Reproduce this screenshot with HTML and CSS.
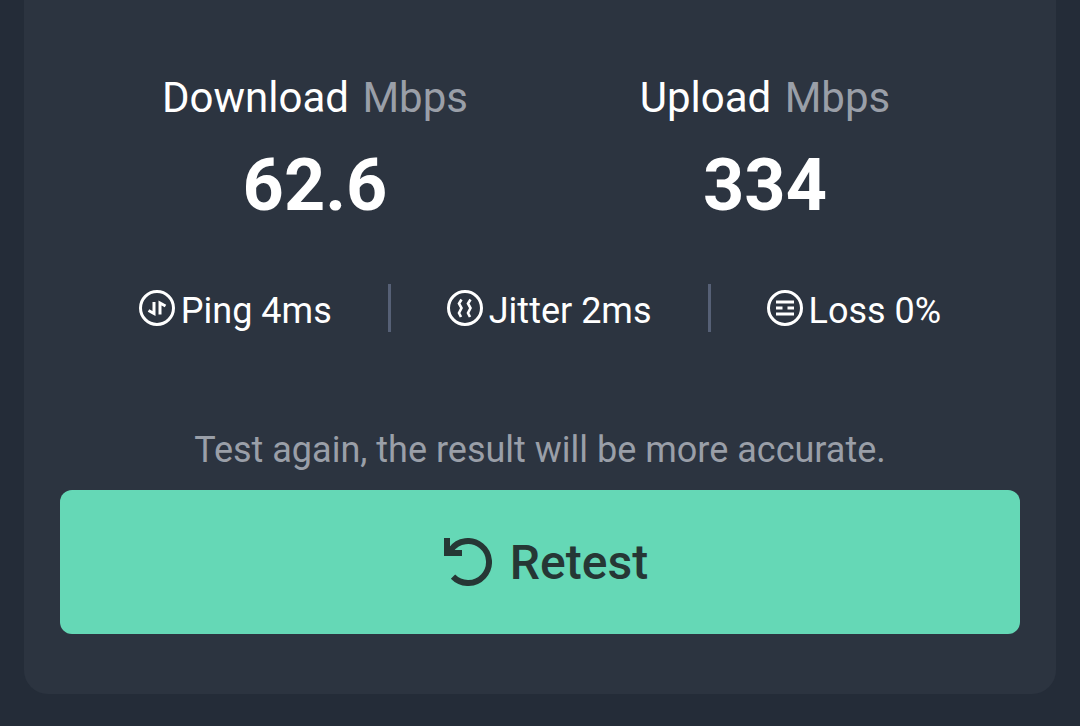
FILE: index.html
```html
<!DOCTYPE html>
<html lang="en">

<head>
    <meta charset="UTF-8">
    <meta name="viewport" content="width=device-width, initial-scale=1.0">
    <title>Speed Test Result</title>
    <link rel="stylesheet" href="styles.css">
</head>

<body>
    <main class="card">
        <!-- Speeds -->
        <div class="speeds">
            <section>
                <h2 class="speed-label">Download <span class="unit">Mbps</span></h2>
                <p class="speed-value">62.6</p>
            </section>
            <section>
                <h2 class="speed-label">Upload <span class="unit">Mbps</span></h2>
                <p class="speed-value">334</p>
            </section>
        </div>

        <!-- Connection quality -->
        <ul class="metrics">
            <li class="metric">
                <svg class="metric-icon" viewBox="0 0 36 36" aria-hidden="true">
                    <circle cx="18" cy="18" r="16.5" />
                    <path d="M15 12v11.5L9.5 20.5M21 24.5V13l5.5 3" />
                </svg>
                <span>Ping 4ms</span>
            </li>
            <li class="metric">
                <svg class="metric-icon" viewBox="0 0 36 36" aria-hidden="true">
                    <circle cx="18" cy="18" r="16.5" />
                    <path d="M14.5 9.5L12 13.5l2.500 4.500-2.500 5 2 4M23.500 9.500L21 13.500l2.500 4.500-2.500 5 2 4" stroke-width="2.6" />
                </svg>
                <span>Jitter 2ms</span>
            </li>
            <li class="metric">
                <svg class="metric-icon" viewBox="0 0 36 36" aria-hidden="true">
                    <circle cx="18" cy="18" r="16.5" />
                    <path d="M9 12h18M9 18h6.5M20.5 18H27M9 24h18" />
                </svg>
                <span>Loss 0%</span>
            </li>
        </ul>

        <!-- Retest -->
        <p class="hint">Test again, the result will be more accurate.</p>
        <button type="button" class="retest">
            <svg class="retest-icon" viewBox="0 0 48 48" aria-hidden="true">
                <path d="M5 14.800L7 11.700A21 21 0 1 1 9 38.700" />
                <path d="M3 0v15h15" />
            </svg>
            <span>Retest</span>
        </button>
    </main>
</body>

</html>
```
FILE: styles.css
```css
/* Base Styles */
* {
    box-sizing: border-box;
}

body {
    font-family: Roboto, sans-serif;
    background-color: #242c38;
    margin: 0;
    color: #fff;
}

h2,
p,
ul {
    margin: 0;
    padding: 0;
}

.card {
    background-color: #2c3440;
    margin: 0 24px 32px;
    padding: 72px 36px 60px;
    border-radius: 0 0 24px 24px;
}

/* Speeds */
.speeds {
    display: grid;
    grid-template-columns: 1fr 1fr;
    padding: 0 30px;
    text-align: center;
}

.speed-label {
    font-size: 42px;
    font-weight: 400;
    line-height: 52px;
}

.unit {
    margin-left: 3px;
    color: #9a9fa8;
}

.speed-value {
    font-size: 72px;
    font-weight: 700;
    line-height: 84px;
    margin-top: 20px;
}

/* Ping, jitter and loss */
.metrics {
    display: flex;
    justify-content: center;
    margin-top: 56px;
    list-style: none;
}

.metric {
    display: flex;
    gap: 6px;
    padding: 0 56px;
    font-size: 36px;
    line-height: 54px;
    height: 48px;
}

.metric + .metric {
    border-left: 3px solid #566076;
}

.metric-icon {
    width: 36px;
    height: 36px;
    margin-top: 6px;
    fill: none;
    stroke: #fff;
    stroke-width: 3;
}

/* Retest */
.hint {
    color: #9a9fa8;
    font-size: 36px;
    line-height: 44px;
    margin-top: 96px;
    text-align: center;
}

.retest {
    display: flex;
    align-items: center;
    justify-content: center;
    gap: 18px;
    width: 100%;
    height: 144px;
    margin-top: 18px;
    padding: 0 0 0 12px;
    border: none;
    border-radius: 12px;
    background-color: #65d8b6;
    color: #263735;
    font-family: inherit;
    font-size: 48px;
    font-weight: 500;
    cursor: pointer;
}

.retest-icon {
    width: 48px;
    height: 48px;
    fill: none;
    stroke: currentColor;
    stroke-width: 6;
}
```
